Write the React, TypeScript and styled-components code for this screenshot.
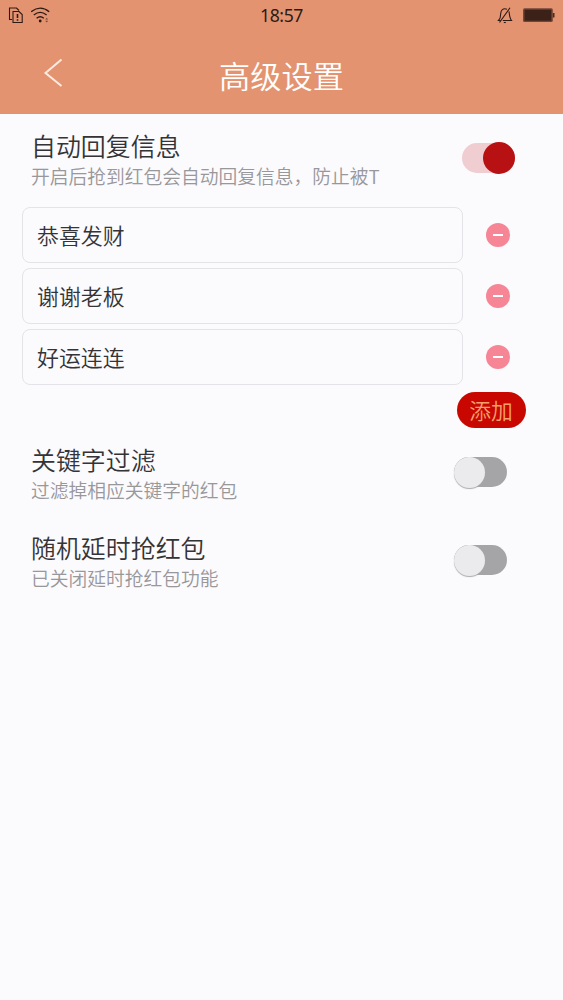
import React from "react";
import styled, { createGlobalStyle } from "styled-components";

const GlobalStyle = createGlobalStyle`
  * { box-sizing: border-box; }
  body {
    margin: 0;
    background: #fbfafd;
    font-family: "Noto Sans CJK SC", sans-serif;
    font-weight: 350;
  }
`;

const Screen = styled.div`
  width: 563px;
  height: 1000px;
  overflow: hidden;
  background: #fbfafd;
`;

const Header = styled.header`
  height: 114px;
  background: #e49371;
`;

const StatusBar = styled.div`
  display: grid;
  grid-template-columns: 1fr auto 1fr;
  align-items: center;
  height: 30px;
  padding: 0 8px;
  color: #2c1a14;
`;

const StatusIcons = styled.div<{ $end?: boolean }>`
  display: flex;
  align-items: center;
  justify-content: ${(p) => (p.$end ? "flex-end" : "flex-start")};
  gap: ${(p) => (p.$end ? 10 : 7)}px;
  height: 28px;
  svg { display: block; }
`;

const Clock = styled.time`
  font: 400 17.6px/30px "Noto Sans", sans-serif;
  letter-spacing: -0.4px;
`;

const NavBar = styled.div`
  display: grid;
  grid-template-columns: 107px 1fr 107px;
  align-items: center;
  height: 84px;
`;

const BackButton = styled.button`
  display: flex;
  align-items: center;
  width: 107px;
  height: 60px;
  padding: 1px 0 0 42px;
  border: 0;
  background: none;
`;

const Title = styled.h1`
  margin: 5px 0 0;
  color: #fff;
  font-size: 31.2px;
  line-height: 44px;
  font-weight: 350;
  text-align: center;
`;

const Setting = styled.section<{ $top: number }>`
  display: flex;
  justify-content: space-between;
  align-items: flex-start;
  height: 60px;
  margin-top: ${(p) => p.$top}px;
  padding-left: 31px;
`;

const SettingName = styled.h2`
  margin: 0;
  color: #343436;
  font-size: 24.95px;
  line-height: 32px;
  font-weight: 350;
`;

const SettingHint = styled.p`
  margin: 0;
  color: #98979a;
  font-size: 18.75px;
  line-height: 29px;
  white-space: nowrap;
`;

const Toggle = styled.button<{ $on?: boolean }>`
  display: flex;
  align-items: center;
  justify-content: ${(p) => (p.$on ? "flex-end" : "flex-start")};
  width: 53px;
  height: 30px;
  margin: ${(p) => (p.$on ? "14px 48px 0 0" : "14px 56px 0 0")};
  padding: 0;
  border: 0;
  border-radius: 15px;
  background: ${(p) => (p.$on ? "#f0cdd0" : "#a5a4a7")};
`;

const Knob = styled.span<{ $on?: boolean }>`
  flex: none;
  width: ${(p) => (p.$on ? 32 : 31)}px;
  height: ${(p) => (p.$on ? 32 : 31)}px;
  border-radius: 50%;
  background: ${(p) => (p.$on ? "#b81113" : "#ebeaec")};
  box-shadow: ${(p) => (p.$on ? "none" : "0 1px 1px #aaa9ac")};
`;

const ReplyList = styled.ul`
  display: grid;
  gap: 5px;
  margin: 18px 0 0;
  padding: 0 0 0 22px;
  list-style: none;
`;

const ReplyRow = styled.li`
  display: flex;
  align-items: center;
  height: 56px;
`;

const ReplyField = styled.div`
  width: 441px;
  height: 56px;
  padding-left: 14px;
  border: 1px solid #e4e3e7;
  border-radius: 8px;
  color: #343436;
  font-size: 21.9px;
  line-height: 54px;
`;

const RemoveButton = styled.button`
  display: flex;
  align-items: center;
  justify-content: center;
  width: 24px;
  height: 24px;
  margin-left: 23px;
  padding: 0;
  border: 0;
  border-radius: 50%;
  background: #f68595;
  &::before {
    content: "";
    width: 10px;
    height: 2px;
    background: #fff;
  }
`;

const AddButton = styled.button`
  display: block;
  width: 69px;
  height: 36px;
  margin: 7px 37px 0 auto;
  padding: 0 1px 0 0;
  border: 0;
  border-radius: 18px;
  background: #c80800;
  color: #f5a06c;
  font: 350 21.8px/36px "Noto Sans CJK SC", sans-serif;
`;

function SimIcon() {
  return (
    <svg width="16" height="17" viewBox="0 0 16 17" fill="none" stroke="currentColor" strokeWidth="1.1">
      <path d="M4 12.5H1.5V1H8.5L11 3.5" />
      <path d="M5 4.5h6L14.2 7.5v8H5z" />
      <path d="M9.5 7v4M9.5 12.2v1.5" strokeWidth="1.6" />
    </svg>
  );
}

function WifiIcon() {
  return (
    <svg width="20" height="17" viewBox="0 0 20 17" fill="none" stroke="currentColor" strokeWidth="1.4">
      <path d="M.2 4.7Q9.2-2.5 18.2 4.7" />
      <path d="M2.8 8Q9.2 2.8 15.6 8" />
      <path d="M5.6 11.3Q9.2 8.3 12.8 11.3" />
      <circle cx="9.2" cy="14" r="1.4" fill="currentColor" stroke="none" />
      <path d="m14.2 12.6 1.5-1.8 1.5 1.8zM14.2 13.8l1.5 1.8 1.5-1.8z" fill="currentColor" stroke="none" opacity=".6" />
    </svg>
  );
}

function MutedBellIcon() {
  return (
    <svg width="16" height="17" viewBox="0 0 16 17" fill="none" stroke="currentColor" strokeWidth="1.1">
      <path d="M10 2.2C6 .6 3.7 3.3 3.7 6.7c0 3.8-.6 5.2-2.2 6.8h2.2M12 4.4c.6 4.8.7 7 2.5 9.1H5.8" />
      <path d="M13 .8 2.5 15.5" />
      <path d="M6.8 15.5h2" />
    </svg>
  );
}

function BatteryIcon() {
  return (
    <svg width="32" height="15" viewBox="0 0 32 15">
      <rect x="0" y=".3" width="29.8" height="13.7" rx="1.5" fill="#714638" />
      <rect x="1.5" y="1.7" width="26.8" height="11" fill="#3c2119" />
      <path d="M29.8 5h1.7v4.5h-1.7z" fill="#4a2b21" />
    </svg>
  );
}

const replies = ["恭喜发财", "谢谢老板", "好运连连"];

function SettingItem({ name, hint, top, on }: { name: string; hint: string; top: number; on?: boolean }) {
  return (
    <Setting $top={top}>
      <div>
        <SettingName>{name}</SettingName>
        <SettingHint>{hint}</SettingHint>
      </div>
      <Toggle $on={on} role="switch" aria-checked={!!on} aria-label={name}>
        <Knob $on={on} />
      </Toggle>
    </Setting>
  );
}

export default function App() {
  return (
    <Screen>
      <GlobalStyle />
      <Header>
        <StatusBar>
          <StatusIcons>
            <SimIcon />
            <WifiIcon />
          </StatusIcons>
          <Clock>18:57</Clock>
          <StatusIcons $end>
            <MutedBellIcon />
            <BatteryIcon />
          </StatusIcons>
        </StatusBar>
        <NavBar>
          <BackButton aria-label="返回">
            <svg width="22" height="30" viewBox="0 0 22 30" fill="none" stroke="#fde9df" strokeWidth="2">
              <path d="M19.5 1.5 3.5 15l16 13" />
            </svg>
          </BackButton>
          <Title>高级设置</Title>
        </NavBar>
      </Header>
      <main>
        <SettingItem name="自动回复信息" hint="开启后抢到红包会自动回复信息，防止被T" top={15} on />
        <ReplyList>
          {replies.map((text) => (
            <ReplyRow key={text}>
              <ReplyField>{text}</ReplyField>
              <RemoveButton aria-label="删除" />
            </ReplyRow>
          ))}
        </ReplyList>
        <AddButton>添加</AddButton>
        <SettingItem name="关键字过滤" hint="过滤掉相应关键字的红包" top={15} />
        <SettingItem name="随机延时抢红包" hint="已关闭延时抢红包功能" top={28} />
      </main>
    </Screen>
  );
}
